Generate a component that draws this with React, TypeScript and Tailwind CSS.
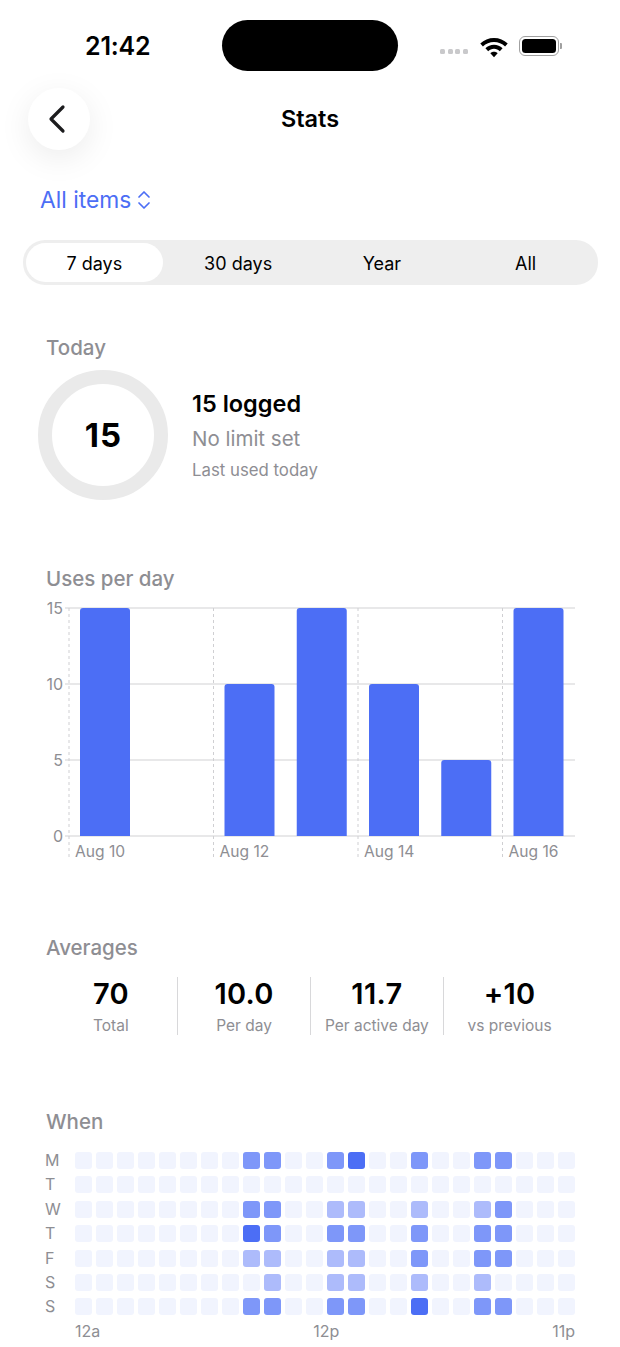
import { ChevronLeft } from "lucide-react";

const FONT = "font-['Inter','Noto_Sans',sans-serif]";

const ranges = ["7 days", "30 days", "Year", "All"];

const averages = [
  { value: "70", label: "Total" },
  { value: "10.0", label: "Per day" },
  { value: "11.7", label: "Per active day" },
  { value: "+10", label: "vs previous" },
];

const bars = [15, 0, 10, 15, 10, 5, 15];
const days = ["M", "T", "W", "T", "F", "S", "S"];

// hour -> level for each weekday
const heat: Record<number, number>[] = [
  { 8: 2, 9: 2, 12: 2, 13: 3, 16: 2, 19: 2, 20: 2 },
  {},
  { 8: 2, 9: 2, 12: 1, 13: 1, 16: 1, 19: 1, 20: 2 },
  { 8: 3, 9: 2, 12: 2, 13: 2, 16: 2, 19: 2, 20: 2 },
  { 8: 1, 9: 1, 12: 1, 13: 1, 16: 2, 19: 2, 20: 2 },
  { 9: 1, 12: 1, 13: 1, 16: 1, 19: 1 },
  { 8: 2, 9: 2, 12: 2, 13: 2, 16: 3, 19: 2, 20: 2 },
];

const levels = ["bg-[#f1f4fe]", "bg-[#adbbfb]", "bg-[#7e97f9]", "bg-[#4c6ef5]"];

function StatusBar() {
  return (
    <div className="flex h-[71px] items-end">
      <div className="flex h-[51px] w-full items-center">
        <span className="ml-[85px] mt-[2px] w-[66px] text-[25px] font-semibold leading-none tracking-[-0.2px] text-black">
          21:42
        </span>
        <div className="ml-[71px] h-[51px] w-[176px] rounded-full bg-black" />
        <div className="ml-[42px] flex items-center">
          <div className="mt-[12px] flex gap-[2.500px]">
            {[0, 1, 2, 3].map((i) => (
              <span key={i} className="h-[5px] w-[5px] rounded-[1.5px] bg-[#c9c9cb]" />
            ))}
          </div>
          <svg className="ml-[10px]" width="32" height="24" viewBox="0 0 28 21">
            <path d="M14 3.500c-4.600 0-8.800 1.800-12 4.800l2.300 2.600C6.900 8.500 10.300 7 14 7s7.100 1.500 9.700 3.900L26 8.300C22.800 5.300 18.600 3.500 14 3.500z" fill="#000" />
            <path d="M14 9.500c-2.900 0-5.500 1.100-7.500 3l2.400 2.600c1.300-1.300 3.100-2.100 5.100-2.100s3.800.8 5.100 2.100l2.400-2.600c-2-1.900-4.600-3-7.500-3z" fill="#000" />
            <path d="M14 15.500c-1.300 0-2.400.5-3.200 1.300l3.200 3.500 3.200-3.500c-.8-.8-1.900-1.300-3.200-1.300z" fill="#000" />
          </svg>
          <div className="ml-[9px] flex items-center">
            <div className="flex h-[20px] w-[40px] items-center justify-center rounded-[6px] border-[1.5px] border-[#a0a0a0]">
              <div className="h-[14px] w-[34px] rounded-[3.5px] bg-black" />
            </div>
            <div className="ml-[1px] h-[6px] w-[2px] rounded-r-[1px] bg-[#a0a0a0]" />
          </div>
        </div>
      </div>
    </div>
  );
}

function Header() {
  return (
    <div className="relative mt-[17px] flex h-[62px] items-center px-[28px]">
      <button className="flex h-[62px] w-[62px] items-center justify-center rounded-full bg-white shadow-[0_8px_32px_rgba(0,0,0,0.08)]">
        <ChevronLeft size={48} strokeWidth={1.6} className="mr-[5px] text-[#1c1c1e]" />
      </button>
      <span className="absolute inset-x-0 text-center text-[23.5px] font-semibold text-black">Stats</span>
    </div>
  );
}

function Filter() {
  return (
    <div className="mt-[33px] flex h-[34px] items-center gap-[6px] pl-[40px] text-[#4c6ef5]">
      <span className="text-[22.8px] leading-none">All items</span>
      <svg width="14" height="22" viewBox="0 0 14 22" fill="none" stroke="#4c6ef5" strokeWidth="1.700" strokeLinecap="round" strokeLinejoin="round">
        <path d="M2 8l5-5 5 5" />
        <path d="M2 14l5 5 5-5" />
      </svg>
    </div>
  );
}

function RangeTabs() {
  return (
    <div className="mx-[22.5px] mt-[23px] grid h-[45px] grid-cols-4 rounded-[22px] bg-[#eeeeee]">
      {ranges.map((r, i) => (
        <div
          key={r}
          className={
            i === 0
              ? "m-[3px] flex items-center justify-center rounded-[20px] bg-white pt-[1px] text-[18px] text-black"
              : "m-[3px] flex items-center justify-center pt-[1px] text-[18px] text-black"
          }
        >
          {r}
        </div>
      ))}
    </div>
  );
}

function SectionTitle({ children }: { children: string }) {
  return <h2 className="pl-[46px] text-[20.5px] font-[550] leading-[26px] text-[#8e8e93]">{children}</h2>;
}

function Today() {
  return (
    <section className="mt-[50px]">
      <SectionTitle>Today</SectionTitle>
      <div className="mt-[9px] flex items-center pl-[38px]">
        <div className="flex h-[130px] w-[130px] items-center justify-center rounded-full border-[14px] border-[#eaeaea]">
          <span className="ml-[1px] text-[33px] font-bold leading-none tracking-[1px] text-black">15</span>
        </div>
        <div className="ml-[24px] flex flex-col">
          <span className="text-[23.5px] font-semibold leading-[30px] text-black">15 logged</span>
          <span className="mt-[6px] text-[20.5px] leading-[28px] text-[#8e8e93]">No limit set</span>
          <span className="mt-[5px] text-[16.8px] leading-[24px] text-[#8e8e93]">Last used today</span>
        </div>
      </div>
    </section>
  );
}

function UsesChart() {
  const top = 8;
  const base = 236;
  const left = 69;
  const colW = 72.25;
  return (
    <section className="mt-[66px]">
      <SectionTitle>Uses per day</SectionTitle>
      <svg className="mt-[8px] block overflow-visible" width="620" height="270" viewBox="0 0 620 270" fontSize="16" fill="#8e8e93">
        {[0, 2, 4, 6].map((i) => (
          <line key={i} x1={left + i * colW} x2={left + i * colW} y1={top} y2={258} stroke="#cfcfd2" strokeDasharray="3 3" />
        ))}
        {[0, 5, 10, 15].map((v) => {
          const y = base - (v / 15) * (base - top);
          return (
            <g key={v}>
              <line x1={left - 4} x2={575} y1={y} y2={y} stroke="#d2d2d4" strokeWidth="1.2" />
              <text x={left - 6} y={y + 6} textAnchor="end">{v}</text>
            </g>
          );
        })}
        {bars.map((v, i) =>
          v > 0 ? (
            <path
              key={i}
              d={`M${left + 11 + i * colW} ${base}V${base - (v / 15) * (base - top) + 3}q0-3 3-3h44q3 0 3 3V${base}z`}
              fill="#4c6ef5"
            />
          ) : null,
        )}
        {["Aug 10", "Aug 12", "Aug 14", "Aug 16"].map((d, i) => (
          <text key={d} x={left + 6 + i * 2 * colW} y={257} fontSize="15.6">{d}</text>
        ))}
      </svg>
    </section>
  );
}

function Averages() {
  return (
    <section className="mt-[65px]">
      <SectionTitle>Averages</SectionTitle>
      <div className="mx-[44.5px] mt-[16px] grid grid-cols-4">
        {averages.map((a, i) => (
          <div
            key={a.label}
            className={
              i === 0
                ? "flex h-[58px] flex-col items-center"
                : "flex h-[58px] flex-col items-center border-l border-[#d8d8da]"
            }
          >
            <span className="text-[29px] font-semibold leading-[34px] tracking-[0.3px] text-black">{a.value}</span>
            <span className="mt-[5px] text-[15.5px] leading-[20px] text-[#8e8e93]">{a.label}</span>
          </div>
        ))}
      </div>
    </section>
  );
}

function When() {
  return (
    <section className="mt-[74px]">
      <SectionTitle>When</SectionTitle>
      <div className="mt-[17px] flex flex-col gap-[7.4px] px-[45px]">
        {heat.map((row, d) => (
          <div key={d} className="flex items-center">
            <span className="w-[30px] text-[16px] leading-[17px] text-[#8e8e93]">{days[d]}</span>
            <div className="grid flex-1 grid-cols-24 gap-[3.7px]">
              {Array.from({ length: 24 }, (_, h) => (
                <div key={h} className={`h-[17px] rounded-[3px] ${levels[row[h] ?? 0]}`} />
              ))}
            </div>
          </div>
        ))}
      </div>
      <div className="mt-[6px] flex justify-between pl-[75px] pr-[45px] text-[16px] leading-[20px] text-[#8e8e93]">
        <span>12a</span>
        <span>12p</span>
        <span>11p</span>
      </div>
    </section>
  );
}

export default function App() {
  return (
    <div className={`h-[1347px] w-[620px] overflow-hidden bg-white ${FONT}`}>
      <StatusBar />
      <Header />
      <Filter />
      <RangeTabs />
      <Today />
      <UsesChart />
      <Averages />
      <When />
    </div>
  );
}
